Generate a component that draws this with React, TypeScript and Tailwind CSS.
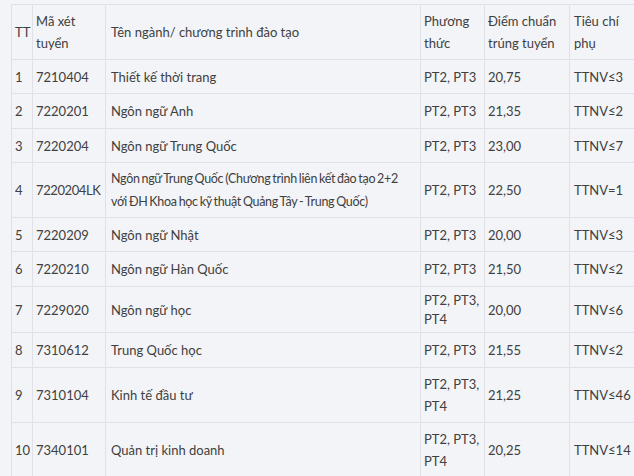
import React from 'react';

type Row = {
  tt: string;
  code: string;
  name: React.ReactNode;
  method: React.ReactNode;
  score: string;
  extra: string;
  h: string;
};

const rows: Row[] = [
  { tt: '1', code: '7210404', name: 'Thiết kế thời trang', method: 'PT2, PT3', score: '20,75', extra: 'TTNV≤3', h: 'h-[34px]' },
  { tt: '2', code: '7220201', name: 'Ngôn ngữ Anh', method: 'PT2, PT3', score: '21,35', extra: 'TTNV≤2', h: 'h-[35px]' },
  { tt: '3', code: '7220204', name: 'Ngôn ngữ Trung Quốc', method: 'PT2, PT3', score: '23,00', extra: 'TTNV≤7', h: 'h-[34px]' },
  {
    tt: '4',
    code: '7220204LK',
    name: (
      <span className="whitespace-nowrap text-[12.5px] tracking-[-0.3px] [word-spacing:-1px]">
        Ngôn ngữ Trung Quốc (Chương trình liên kết đào tạo 2+2
        <br />
        với ĐH Khoa học kỹ thuật Quảng Tây - Trung Quốc)
      </span>
    ),
    method: 'PT2, PT3',
    score: '22,50',
    extra: 'TTNV=1',
    h: 'h-[55px]',
  },
  { tt: '5', code: '7220209', name: 'Ngôn ngữ Nhật', method: 'PT2, PT3', score: '20,00', extra: 'TTNV≤3', h: 'h-[34px]' },
  { tt: '6', code: '7220210', name: 'Ngôn ngữ Hàn Quốc', method: 'PT2, PT3', score: '21,50', extra: 'TTNV≤2', h: 'h-[35px]' },
  {
    tt: '7',
    code: '7229020',
    name: 'Ngôn ngữ học',
    method: (
      <span className="leading-[19px] block">
        PT2, PT3,
        <br />
        PT4
      </span>
    ),
    score: '20,00',
    extra: 'TTNV≤6',
    h: 'h-[46px]',
  },
  { tt: '8', code: '7310612', name: 'Trung Quốc học', method: 'PT2, PT3', score: '21,55', extra: 'TTNV≤2', h: 'h-[35px]' },
  {
    tt: '9',
    code: '7310104',
    name: 'Kinh tế đầu tư',
    method: (
      <>
        PT2, PT3,
        <br />
        PT4
      </>
    ),
    score: '21,25',
    extra: 'TTNV≤46',
    h: 'h-[55px]',
  },
  {
    tt: '10',
    code: '7340101',
    name: 'Quản trị kinh doanh',
    method: (
      <>
        PT2, PT3,
        <br />
        PT4
      </>
    ),
    score: '20,25',
    extra: 'TTNV≤14',
    h: 'h-[55px]',
  },
];

const cell = 'border border-[#dfe1e6] px-[3px] align-middle';

const App: React.FC = () => {
  return (
    <div className="w-[634px] h-[476px] overflow-hidden bg-[#f3f4f7] text-[#404040]" style={{ fontFamily: 'Lato, "Noto Sans", sans-serif' }}>
      <div className="pt-[4px] pl-[11px]">
        <table className="border-collapse table-fixed w-[650px] text-[13px] leading-[22px]">
          <colgroup>
            <col className="w-[21px]" />
            <col className="w-[73px]" />
            <col className="w-[315px]" />
            <col className="w-[64px]" />
            <col className="w-[85px]" />
            <col className="w-[92px]" />
          </colgroup>
          <thead>
            <tr className="h-[55px] text-left">
              <th className={`${cell} font-normal px-[2px]`}>TT</th>
              <th className={`${cell} font-normal`}>
                Mã xét
                <br />
                tuyển
              </th>
              <th className={`${cell} font-normal pl-[5px]`}>Tên ngành/ chương trình đào tạo</th>
              <th className={`${cell} font-normal`}>
                Phương
                <br />
                thức
              </th>
              <th className={`${cell} font-normal`}>
                Điểm chuẩn
                <br />
                trúng tuyển
              </th>
              <th className={`${cell} font-normal pl-[4px]`}>
                Tiêu chí
                <br />
                phụ
              </th>
            </tr>
          </thead>
          <tbody>
            {rows.map((r) => (
              <tr key={r.tt} className={r.h}>
                <td className={`${cell} px-[2px]`}>{r.tt}</td>
                <td className={`${cell} ${r.code.length > 7 ? 'tracking-[-0.4px]' : ''}`}>{r.code}</td>
                <td className={`${cell} pl-[5px]`}>{r.name}</td>
                <td className={cell}>{r.method}</td>
                <td className={cell}>{r.score}</td>
                <td className={`${cell} pl-[4px]`}>{r.extra}</td>
              </tr>
            ))}
          </tbody>
        </table>
      </div>
    </div>
  );
};

export default App;
